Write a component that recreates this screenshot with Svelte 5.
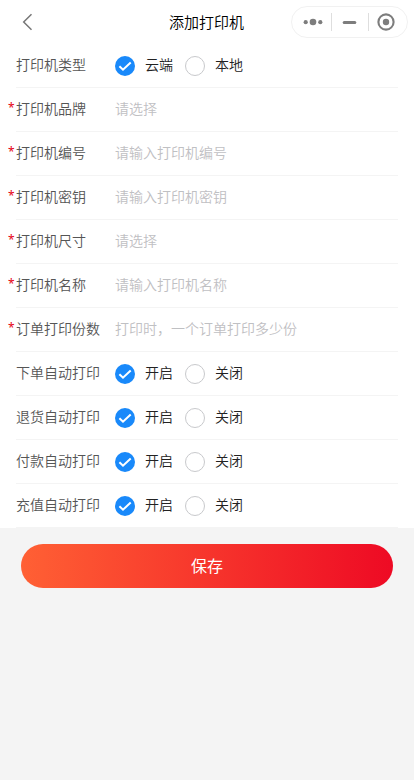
<script>
  const CLOUD = "cloud";
  const ON = "on";

  const TYPE_OPTIONS = [
    { value: CLOUD, text: "云端" },
    { value: "local", text: "本地" },
  ];

  const SWITCH_OPTIONS = [
    { value: ON, text: "开启" },
    { value: "off", text: "关闭" },
  ];

  const FIELDS = [
    { name: "type", label: "打印机类型", options: TYPE_OPTIONS },
    { name: "brand", label: "打印机品牌", placeholder: "请选择", picker: true },
    { name: "number", label: "打印机编号", placeholder: "请输入打印机编号" },
    { name: "secret", label: "打印机密钥", placeholder: "请输入打印机密钥" },
    { name: "size", label: "打印机尺寸", placeholder: "请选择", picker: true },
    { name: "title", label: "打印机名称", placeholder: "请输入打印机名称" },
    { name: "copies", label: "订单打印份数", placeholder: "打印时，一个订单打印多少份" },
    { name: "placeOrder", label: "下单自动打印", options: SWITCH_OPTIONS },
    { name: "refund", label: "退货自动打印", options: SWITCH_OPTIONS },
    { name: "payment", label: "付款自动打印", options: SWITCH_OPTIONS },
    { name: "recharge", label: "充值自动打印", options: SWITCH_OPTIONS },
  ];

  let form = $state({
    type: CLOUD,
    brand: "",
    number: "",
    secret: "",
    size: "",
    title: "",
    copies: "",
    placeOrder: ON,
    refund: ON,
    payment: ON,
    recharge: ON,
  });

  const save = (event) => {
    event.preventDefault();
  };
</script>

<div class="page">
  <header class="nav">
    <button class="back" aria-label="返回">
      <svg width="12" height="18" viewBox="0 0 12 18">
        <path d="M9.5 1.2 1.7 9l7.8 7.8" />
      </svg>
    </button>
    <h1>添加打印机</h1>
    <!-- Mini program capsule -->
    <div class="capsule">
      <svg width="117" height="32" viewBox="0 0 117 32">
        <rect class="outline" x="0.5" y="0.5" width="116" height="31" rx="15.5" />
        <path class="divider" d="M40.5 7v18M77.5 7v18" />
        <circle cx="14.7" cy="16.2" r="2.1" />
        <circle cx="22" cy="16" r="3.3" />
        <circle cx="29.3" cy="16.2" r="2.1" />
        <path class="minus" d="M53.2 16.5h10.6" />
        <circle class="ring" cx="95" cy="16" r="7.6" />
        <circle cx="95" cy="16" r="3.2" />
      </svg>
    </div>
  </header>

  <form onsubmit={save}>
    <div class="cells">
      {#each FIELDS as field}
        <div class="cell">
          <div class="label" class:required={!field.options}>{field.label}</div>
          {#if field.options}
            <div class="radios">
              {#each field.options as option}
                <label class="radio">
                  <input
                    type="radio"
                    name={field.name}
                    value={option.value}
                    bind:group={form[field.name]}
                  />
                  <span class="dot" class:checked={form[field.name] === option.value}>
                    {#if form[field.name] === option.value}
                      <svg width="20" height="20" viewBox="0 0 20 20">
                        <path d="m4.4 10.2 3.6 3.5 7.7-7.3" />
                      </svg>
                    {/if}
                  </span>
                  <span class="radio-text">{option.text}</span>
                </label>
              {/each}
            </div>
          {:else}
            <input
              class="control"
              placeholder={field.placeholder}
              readonly={field.picker}
              bind:value={form[field.name]}
            />
          {/if}
        </div>
      {/each}
    </div>

    <button class="save" type="submit">保存</button>
  </form>
</div>

<style>
  :global(body) {
    background: #f4f4f4;
  }

  .page {
    min-height: 100vh;
    background: #f4f4f4;
    font-family: "Noto Sans CJK SC", sans-serif;
    font-size: 14px;
    font-weight: 350;
    color: #222;
  }

  button,
  input {
    font: inherit;
    border: 0;
    padding: 0;
    margin: 0;
    background: none;
  }

  .nav {
    display: grid;
    grid-template-columns: 1fr auto 1fr;
    align-items: center;
    height: 44px;
    background: #fff;
  }

  h1 {
    margin: 0;
    padding-right: 1px;
    font-size: 15px;
    font-weight: 350;
    line-height: 24px;
    color: #000;
  }

  .back {
    justify-self: start;
    display: flex;
    padding-left: 22px;
  }

  .back path {
    fill: none;
    stroke: #777;
    stroke-width: 1.5;
  }

  .capsule {
    justify-self: end;
    display: flex;
    padding-right: 6px;
  }

  .capsule circle {
    fill: #7d7d7d;
  }

  .capsule .outline {
    fill: #fff;
    stroke: #f1f1f1;
  }

  .capsule .divider {
    stroke: #dedede;
  }

  .capsule .minus {
    stroke: #7d7d7d;
    stroke-width: 3;
    stroke-linecap: round;
  }

  .capsule .ring {
    fill: none;
    stroke: #7d7d7d;
    stroke-width: 2.1;
  }

  .cells {
    padding: 0 16px;
    background: #fff;
  }

  .cell {
    display: flex;
    align-items: center;
    box-sizing: border-box;
    height: 44px;
    border-bottom: 1px solid #f4f4f4;
  }

  .label {
    position: relative;
    flex: none;
    width: 87px;
    margin-right: 12px;
    padding-bottom: 3px;
    line-height: 24px;
    color: #555;
  }

  .required::before {
    content: "*";
    position: absolute;
    left: -8px;
    top: 0;
    font-family: "Noto Sans", sans-serif;
    font-size: 12px;
    font-weight: 400;
    color: #e60012;
  }

  .control {
    flex: 1;
    min-width: 0;
    height: 24px;
    padding-bottom: 3px;
    line-height: 24px;
    outline: none;
    color: #222;
  }

  .control::placeholder {
    color: #bfc0c3;
    opacity: 1;
  }

  .radios {
    display: flex;
    gap: 12px;
  }

  .radio {
    display: flex;
    align-items: center;
    gap: 10px;
    cursor: pointer;
  }

  .radio input {
    display: none;
  }

  .dot {
    box-sizing: border-box;
    display: flex;
    width: 20px;
    height: 20px;
    margin-top: 1px;
    border: 1px solid #c8c9cc;
    border-radius: 50%;
  }

  .dot.checked {
    border: 0;
    background: #1989fa;
  }

  .dot path {
    fill: none;
    stroke: #fff;
    stroke-width: 2;
  }

  .radio-text {
    padding-bottom: 3px;
    line-height: 24px;
  }

  .save {
    display: block;
    width: 372px;
    height: 44px;
    margin: 16px auto 0;
    padding-bottom: 3px;
    border-radius: 22px;
    background: linear-gradient(to right, #ff6034, #ee0a24);
    font-size: 16px;
    font-weight: 400;
    color: #fff;
    cursor: pointer;
  }
</style>
